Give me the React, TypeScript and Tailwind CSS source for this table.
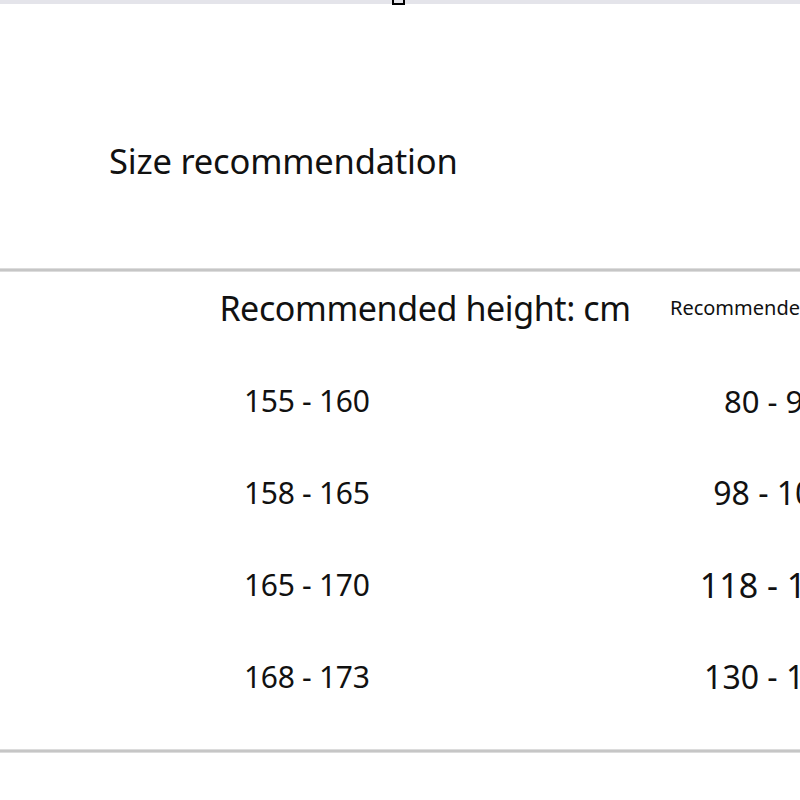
const heights = ["155 - 160", "158 - 165", "165 - 170", "168 - 173"];

const weights = [
  { label: "80 - 90", size: "text-[31px]" },
  { label: "98 - 105", size: "text-[32px]" },
  { label: "118 - 125", size: "text-[34px]" },
  { label: "130 - 140", size: "text-[32px]" },
];

const App = () => {
  return (
    <div className="relative w-[800px] h-[800px] overflow-hidden bg-white text-[#111] font-['Noto_Sans',sans-serif]">
      {/* top strip with cut-off glyph */}
      <div className="h-[4px] bg-[#e4e4ea]" />
      <div className="absolute left-[392px] top-[-6px] w-[13px] h-[11px] border-2 border-black" />

      <div className="h-[264px] pt-[133px] pl-[109px]">
        <h1 className="text-[34.5px] leading-[48px] tracking-[-0.2px]">Size recommendation</h1>
      </div>

      <div className="h-[4px] bg-[#c6c6c6] border-y border-[#dcdcdc]" />

      <div className="ml-[200px] grid grid-cols-[450px_275px] h-[477px]">
        <div className="flex flex-col">
          <div className="h-[72px] mb-[11px] flex items-center justify-center">
            <span className="text-[34px] leading-none tracking-[-0.4px] whitespace-nowrap">Recommended height: cm</span>
          </div>
          {heights.map((h) => (
            <div key={h} className="h-[92px] flex items-center pl-[44px]">
              <span className="text-[30px] leading-none tracking-[-0.3px] whitespace-nowrap">{h}</span>
            </div>
          ))}
        </div>
        <div className="flex flex-col">
          <div className="h-[72px] mb-[11px] flex items-center justify-center pl-[10px]">
            <span className="text-[20px] leading-none whitespace-nowrap">Recommended weight: kg</span>
          </div>
          {weights.map((w) => (
            <div key={w.label} className="h-[92px] flex items-center justify-center pr-[30px]">
              <span className={`${w.size} leading-none whitespace-nowrap`}>{w.label}</span>
            </div>
          ))}
        </div>
      </div>

      <div className="h-[4px] bg-[#c6c6c6] border-y border-[#dcdcdc]" />
    </div>
  );
};

export default App;
